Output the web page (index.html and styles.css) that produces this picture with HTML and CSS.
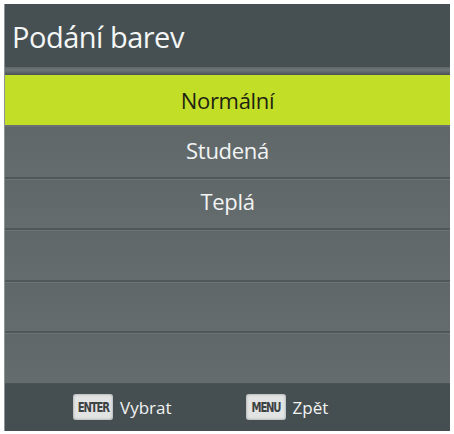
FILE: index.html
```html
<!DOCTYPE html>
<html>
<head>
<meta charset="utf-8">
<link rel="stylesheet" href="styles.css">
</head>
<body>
<div class="panel">
  <div class="header">Podání barev</div>
  <div class="sep"></div>
  <div class="row selected">Normální</div>
  <div class="row">Studená</div>
  <div class="row">Teplá</div>
  <div class="row"></div>
  <div class="row"></div>
  <div class="row"></div>
  <div class="footer">
    <div class="hint"><span class="key"><span class="keytext">ENTER</span></span><span class="label">Vybrat</span></div>
    <div class="hint"><span class="key"><span class="keytext">MENU</span></span><span class="label">Zpět</span></div>
  </div>
</div>
</body>
</html>
```

FILE: styles.css
```css
html, body {
  margin: 0;
  padding: 0;
  background: #ffffff;
}
body {
  padding: 4px 4px 3px 4px;
  font-family: "Open Sans", "Noto Sans", sans-serif;
}
.panel {
  width: 446px;
  height: 427px;
  display: flex;
  flex-direction: column;
  background: #626a6c;
  border-left: 1px solid #8d9394;
  box-sizing: border-box;
}
.header {
  height: 63px;
  background: #465052;
  color: #f4f6f6;
  font-size: 29px;
  letter-spacing: -0.5px;
  display: flex;
  align-items: center;
  padding-left: 7px;
  padding-top: 1px;
  box-sizing: border-box;
}
.sep {
  height: 8px;
  background: linear-gradient(#5e6668 0, #6e7677 40%, #5a6163 75%, #4a5154 100%);
}
.row {
  height: 51.6px;
  display: flex;
  align-items: center;
  justify-content: center;
  color: #f2f4f4;
  font-size: 22px;
  letter-spacing: -0.3px;
  padding-bottom: 4px;
  background: linear-gradient(#5f6769, #646c6e);
  border-top: 2px solid #50575a;
  box-shadow: inset 0 1px 0 #6d7476;
  box-sizing: border-box;
}
.row.selected {
  height: 50px;
  padding-bottom: 0;
  background: #c3de27;
  color: #1d2412;
  border-top: none;
  box-shadow: none;
}
.row.selected + .row {
  border-top: 2px solid #6a7074;
  box-shadow: none;
}
.footer {
  flex: 1;
  background: #454e50;
  display: flex;
  align-items: center;
  padding-left: 68px;
  gap: 74px;
  box-sizing: border-box;
  border-top: 1px solid #4b5355;
}
.hint {
  display: flex;
  align-items: center;
  gap: 7px;
}
.key {
  width: 40px;
  height: 26px;
  display: flex;
  align-items: center;
  justify-content: center;
  background: #e2e4e3;
  border-radius: 3px;
  box-shadow: inset 0 0 3px #8f9494;
  overflow: hidden;
}
.keytext {
  color: #3d4243;
  font-family: "DejaVu Sans Condensed", "Liberation Sans Narrow", sans-serif;
  font-weight: bold;
  font-size: 14px;
  letter-spacing: -1.5px;
  transform: scaleX(0.8);
}
.label {
  color: #f2f4f4;
  font-size: 17px;
}
```
